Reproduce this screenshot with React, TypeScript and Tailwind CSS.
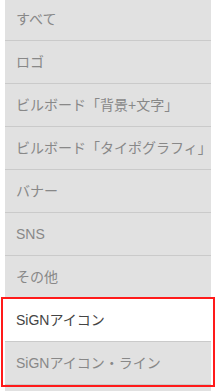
const ITEMS = [
  'すべて',
  'ロゴ',
  'ビルボード「背景+文字」',
  'ビルボード「タイポグラフィ」',
  'バナー',
  'SNS',
  'その他',
]

const MARKED = ['SiGNアイコン', 'SiGNアイコン・ライン']

function Row({ label, active, last }: { label: string; active?: boolean; last?: boolean }) {
  return (
    <div
      className={[
        'h-[43px] flex items-center px-[11px] text-[14px] whitespace-nowrap overflow-hidden',
        last ? '' : 'border-b border-[#cacaca]',
        active ? 'bg-white text-[#444]' : 'bg-[#e1e1e1] text-[#888]',
      ].join(' ')}
    >
      {label}
    </div>
  )
}

export default function App() {
  return (
    <div
      className="w-[216px] h-[391px] bg-white overflow-hidden"
      style={{ fontFamily: '"Liberation Sans", "Noto Sans CJK JP", sans-serif' }}
    >
      <div className="mx-[5px] -mt-[2px] flex flex-col">
        {ITEMS.map(label => (
          <Row key={label} label={label} />
        ))}
        <div className="relative">
          <Row label={MARKED[0]} active />
          <Row label={MARKED[1]} />
          <div className="absolute -inset-x-[4px] -top-[2px] -bottom-[2px] border-2 border-[#ff1a1a] pointer-events-none" />
        </div>
        <div className="mt-[2px] h-[43px] bg-[#e1e1e1]" />
      </div>
    </div>
  )
}
